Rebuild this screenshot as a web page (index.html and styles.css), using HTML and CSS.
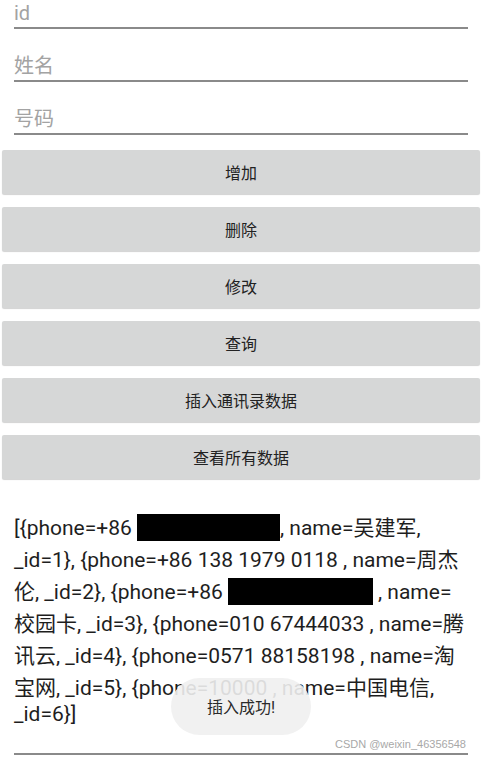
FILE: index.html
```html
<!DOCTYPE html>
<html lang="zh-CN">
<head>
    <meta charset="UTF-8">
    <meta name="viewport" content="width=device-width, initial-scale=1.0">
    <title>通讯录</title>
    <link rel="stylesheet" href="styles.css">
</head>
<body>
    <div id="page">
        <div class="form">
            <input class="field" type="text" placeholder="id">
            <input class="field" type="text" placeholder="姓名">
            <input class="field" type="text" placeholder="号码">
        </div>
        <div class="actions">
            <button>增加</button>
            <button>删除</button>
            <button>修改</button>
            <button>查询</button>
            <button>插入通讯录数据</button>
            <button>查看所有数据</button>
        </div>
        <div id="result">[{phone=+86 <span class="redact"></span>, name=<span class="zh">吴建军</span>, _id=1}, {phone=+86 138 1979 0118 , name=<span class="zh">周杰伦</span>, _id=2}, {phone=+86<span class="redact second"></span> , name=<span class="zh nobreak">校园卡</span>, _id=3}, {phone=010 67444033 , name=<span class="zh">腾讯云</span>, _id=4}, {phone=0571 88158198 , name=<span class="zh">淘宝网</span>, _id=5}, {phone=10000 , name=<span class="zh">中国电信</span>, _id=6}]</div>
        <div class="field-line"></div>
    </div>
    <div class="toast">插入成功!</div>
    <div class="watermark">CSDN @weixin_46356548</div>
</body>
</html>
```

FILE: styles.css
```css
body {
    margin: 0;
    overflow: hidden;
    background: #fff;
    height: 100vh;
    font-family: Roboto, "Noto Sans CJK SC", sans-serif;
    color: #1e1e1e;
}
#page {
    margin-top: -24px;
}
.form {
    display: flex;
    flex-direction: column;
    padding: 0 14px;
}
.field {
    display: block;
    box-sizing: border-box;
    width: 100%;
    height: 53px;
    padding: 25px 0 2px;
    border: none;
    border-bottom: 2px solid #8a8a8a;
    background: none;
    outline: none;
    font-family: inherit;
    font-size: 20px;
    color: #1e1e1e;
}
.field::placeholder {
    color: #a3a3a3;
}
.actions {
    display: flex;
    flex-direction: column;
    gap: 13px;
    margin: 15px 2px 0;
}
.actions button {
    height: 44px;
    border: none;
    border-radius: 2px;
    background: #d6d7d7;
    box-shadow: 0 1px 1px rgba(0, 0, 0, 0.18);
    font-family: inherit;
    font-size: 16px;
    color: #222;
    padding: 0;
}
#result {
    margin: 33px 14px 0;
    font-size: 21px;
    line-height: 21px;
}
.zh {
    line-height: 32px;
}
.nobreak {
    white-space: nowrap;
}
.redact {
    display: inline-block;
    width: 143px;
    height: 27px;
    background: #000;
    vertical-align: -6px;
    line-height: 32px;
}
.redact.second {
    width: 145px;
    margin-left: 5px;
}
.field-line {
    height: 28px;
    margin: 0 14px;
    border-bottom: 2px solid #8a8a8a;
}
.toast {
    position: absolute;
    left: 171px;
    top: 678px;
    width: 140px;
    height: 57px;
    border-radius: 29px;
    background: rgba(239, 239, 239, 0.9);
    display: flex;
    align-items: center;
    justify-content: center;
    font-size: 16px;
    color: #2a2a2a;
    padding-bottom: 2px;
    box-sizing: border-box;
}
.watermark {
    position: absolute;
    right: 16px;
    top: 738px;
    font-family: "Liberation Sans", sans-serif;
    font-size: 11px;
    color: #a8a8a8;
}
```
